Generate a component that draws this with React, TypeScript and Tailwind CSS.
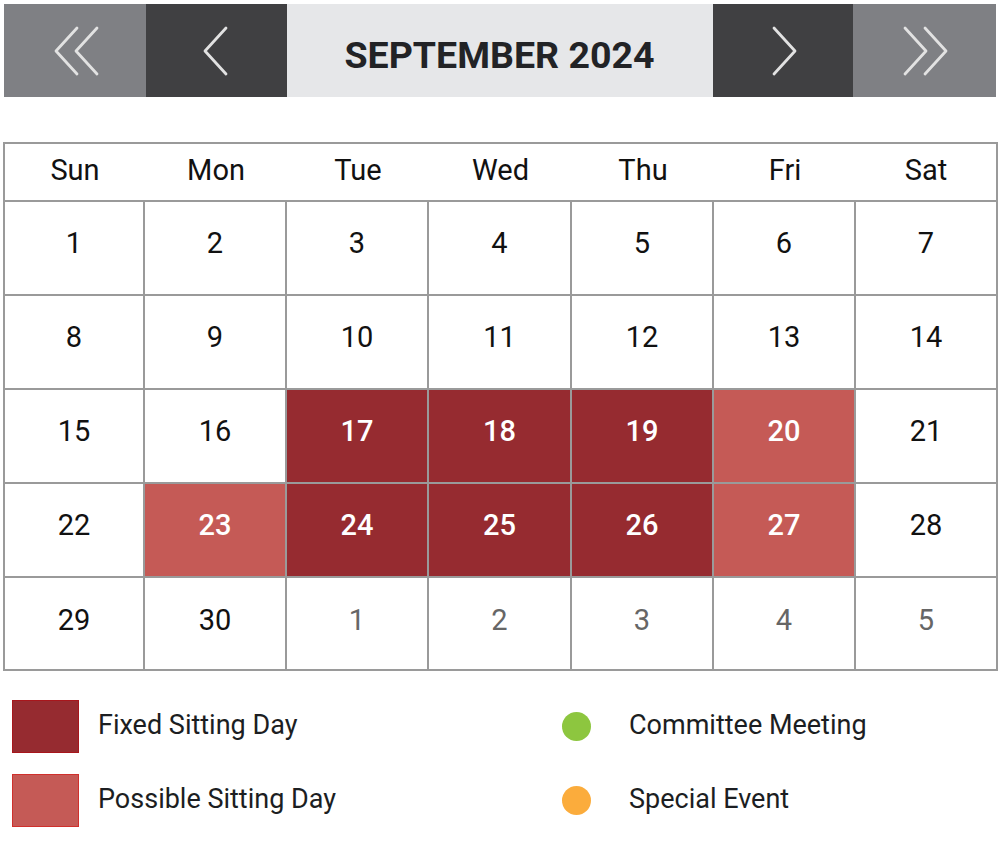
import React from "react";

const font = { fontFamily: "Roboto, 'Liberation Sans', sans-serif" };

type Cell = { d: number; kind?: "fixed" | "possible"; other?: boolean };

const weeks: Cell[][] = [
  [1, 2, 3, 4, 5, 6, 7].map((d) => ({ d })),
  [8, 9, 10, 11, 12, 13, 14].map((d) => ({ d })),
  [
    { d: 15 },
    { d: 16 },
    { d: 17, kind: "fixed" },
    { d: 18, kind: "fixed" },
    { d: 19, kind: "fixed" },
    { d: 20, kind: "possible" },
    { d: 21 },
  ],
  [
    { d: 22 },
    { d: 23, kind: "possible" },
    { d: 24, kind: "fixed" },
    { d: 25, kind: "fixed" },
    { d: 26, kind: "fixed" },
    { d: 27, kind: "possible" },
    { d: 28 },
  ],
  [
    { d: 29 },
    { d: 30 },
    { d: 1, other: true },
    { d: 2, other: true },
    { d: 3, other: true },
    { d: 4, other: true },
    { d: 5, other: true },
  ],
];

function Chevron({ dir, double }: { dir: "left" | "right"; double?: boolean }) {
  const single = (x: number) =>
    dir === "left"
      ? `M${x + 21} 0 L${x} 23 L${x + 21} 46`
      : `M${x} 0 L${x + 21} 23 L${x} 46`;
  return (
    <svg width={double ? 45 : 25} height={50} viewBox={double ? "-2 -2 45 50" : "-2 -2 25 50"} fill="none">
      <path d={single(0)} stroke="#e2e2e2" strokeWidth={2.8} strokeLinecap="round" strokeLinejoin="round" />
      {double && <path d={single(20)} stroke="#e2e2e2" strokeWidth={2.8} strokeLinecap="round" strokeLinejoin="round" />}
    </svg>
  );
}

export default function App() {
  return (
    <div className="w-[1000px] h-[843px] bg-white" style={font}>
      <div className="pt-[4px] px-[4px]">
        <div className="flex h-[93px] w-[992px]">
          <div className="w-[142px] bg-[#7f8084] flex items-center justify-center pl-[2px]">
            <Chevron dir="left" double />
          </div>
          <div className="w-[141px] bg-[#404042] flex items-center justify-center pr-[3px]">
            <Chevron dir="left" />
          </div>
          <div className="flex-1 bg-[#e6e7e9] flex items-center justify-center pt-[9px]">
            <span className="text-[37.5px] font-bold text-[#222326] pr-[1px]">SEPTEMBER 2024</span>
          </div>
          <div className="w-[140px] bg-[#404042] flex items-center justify-center pl-[3px]">
            <Chevron dir="right" />
          </div>
          <div className="w-[143px] bg-[#7f8084] flex items-center justify-center pl-[1px]">
            <Chevron dir="right" double />
          </div>
        </div>
      </div>

      <div className="mt-[45px] ml-[3px] w-[995px] border-2 border-[#9a9a9a]">
        <div className="grid grid-cols-[140px_142px_142px_143px_142px_142px_140px] h-[58px] border-b-2 border-[#9a9a9a]">
          {["Sun", "Mon", "Tue", "Wed", "Thu", "Fri", "Sat"].map((n) => (
            <div key={n} className="flex items-center justify-center text-[29px] text-[#111] pb-[2px]">
              {n}
            </div>
          ))}
        </div>
        {weeks.map((w, i) => (
          <div
            key={i}
            className={`grid grid-cols-[140px_142px_142px_143px_142px_142px_140px] ${i < 4 ? "h-[94px] border-b-2 border-[#9a9a9a]" : "h-[91px]"}`}
          >
            {w.map((c, j) => {
              const bg =
                c.kind === "fixed"
                  ? "bg-[#962b30] text-white font-medium"
                  : c.kind === "possible"
                  ? "bg-[#c55a56] text-white font-medium"
                  : "bg-white";
              const color = c.kind ? "" : c.other ? "text-[#666]" : "text-[#111]";
              return (
                <div
                  key={j}
                  className={`flex items-center justify-center text-[29px] ${i < 4 ? "pb-[9px]" : "pb-[6px]"} ${bg} ${color} ${j < 6 ? "border-r-2 border-[#9a9a9a]" : ""}`}
                >
                  {c.d}
                </div>
              );
            })}
          </div>
        ))}
      </div>

      <div className="flex mt-[29px]">
        <div className="w-[550px] pl-[12px] flex flex-col gap-[21px]">
          <div className="flex items-center">
            <div className="w-[67px] h-[53px] bg-[#962b30] border border-[#a8161c]" />
            <span className="ml-[19px] text-[27px] text-[#1c1e22] pb-[2px]">Fixed Sitting Day</span>
          </div>
          <div className="flex items-center">
            <div className="w-[67px] h-[53px] bg-[#c55a56] border border-[#d0302c]" />
            <span className="ml-[19px] text-[27px] text-[#1c1e22] pb-[2px]">Possible Sitting Day</span>
          </div>
        </div>
        <div className="pl-[12px] flex flex-col gap-[21px]">
          <div className="flex items-center h-[53px]">
            <div className="w-[29px] h-[29px] rounded-full bg-[#8dc63f]" />
            <span className="ml-[38px] text-[27px] text-[#1c1e22] pb-[2px]">Committee Meeting</span>
          </div>
          <div className="flex items-center h-[53px]">
            <div className="w-[29px] h-[29px] rounded-full bg-[#fbac3c]" />
            <span className="ml-[38px] text-[27px] text-[#1c1e22] pb-[2px]">Special Event</span>
          </div>
        </div>
      </div>
    </div>
  );
}
